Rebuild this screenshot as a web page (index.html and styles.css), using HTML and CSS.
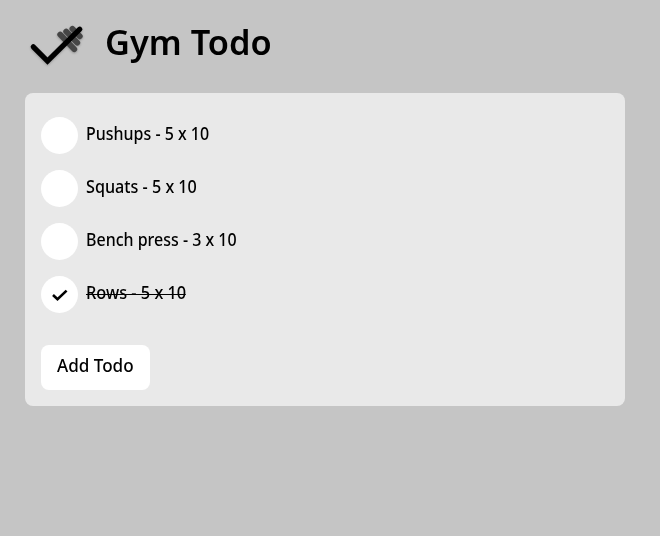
FILE: index.html
```html
<!DOCTYPE html>
<html lang="en">
<head>
<meta charset="utf-8">
<title>Gym Todo</title>
<link rel="stylesheet" href="styles.css">
</head>
<body>
<header class="header">
  <svg class="logo" viewBox="0 0 64 48" fill="none" stroke-linecap="round">
    <g stroke="#464646" stroke-width="5.8">
      <path d="M35.2 16.5L49.3 31.2M41.2 13.5L52.3 24.7M47.4 10.8L54.8 18.3"/>
    </g>
    <path d="M8.3 28.8L22.5 43L54.8 11.2" stroke="#000" stroke-width="5.2"/>
  </svg>
  <h1 class="title"><span class="text">Gym Todo</span></h1>
</header>
<main class="panel">
  <ul class="list">
    <li class="item"><span class="check"></span><span class="text">Pushups - 5 x 10</span></li>
    <li class="item"><span class="check"></span><span class="text squats">Squats - 5 x 10</span></li>
    <li class="item"><span class="check"></span><span class="text">Bench press - 3 x 10</span></li>
    <li class="item done"><span class="check"><svg class="tick" viewBox="0 0 20 20"><path d="M3 10L7.5 14.2L16.6 5.6" fill="none" stroke="#000" stroke-width="2.6"/></svg></span><span class="text rows">Rows - 5 x 10</span></li>
  </ul>
  <button class="add"><span class="text">Add Todo</span></button>
</main>
</body>
</html>
```
FILE: styles.css
```css
* { box-sizing: border-box; }
body {
  margin: 0;
  min-height: 536px;
  padding: 15px 35px 0 25px;
  background: #c5c5c5;
  color: #000;
  font: 500 18px/24px "Noto Sans", sans-serif;
}
.header { display: flex; align-items: center; height: 78px; padding-bottom: 24px; }
.logo { width: 64px; height: 48px; filter: drop-shadow(0 1px 1px rgba(0, 0, 0, .25)); }
.title { margin: 0 0 0 16px; font-size: 33.5px; line-height: 48px; font-weight: 600; }
.text { display: inline-block; padding-bottom: 6px; white-space: nowrap; transform-origin: left center; }
.title .text { padding: 0; transform: scaleX(1.025); }
.panel { width: 600px; height: 313px; padding: 24px 16px 16px; border-radius: 8px; background: #e9e9e9; }
.list { margin: 0 0 32px; padding: 0; list-style: none; display: flex; flex-direction: column; gap: 16px; }
.item { display: flex; align-items: center; gap: 8px; height: 37px; }
.check { width: 37px; height: 37px; border-radius: 50%; background: #fff; display: flex; align-items: center; justify-content: center; }
.tick { width: 20px; height: 20px; }
.item .text { transform: scaleX(.888); }
.item .squats { transform: scaleX(.898); }
.item .rows { position: relative; transform: scaleX(.907); }
/* strike-through on a completed item */
.done .text::after { content: ""; position: absolute; left: 0; right: 0; top: 14px; height: 1px; background: #000; }
.add { display: flex; align-items: center; width: 109px; height: 45px; padding: 0 16px; border: 0; border-radius: 8px; background: #fff; color: #000; font: inherit; }
.add .text { transform: scaleX(.948); }
```
